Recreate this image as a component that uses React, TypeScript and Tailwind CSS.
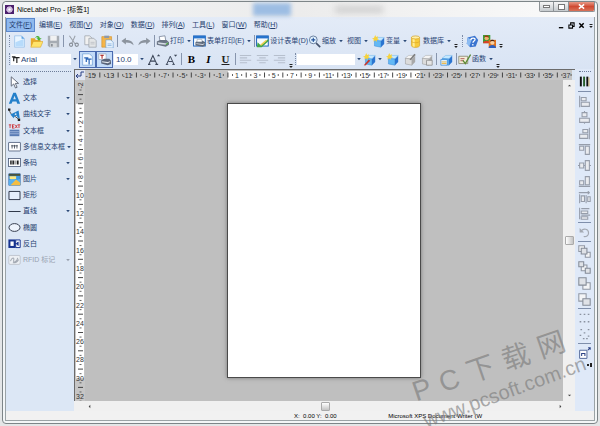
import type { ReactNode } from 'react';

const MENUS = ['文件(F)', '编辑(E)', '视图(V)', '对象(O)', '数据(D)', '排列(A)', '工具(L)', '窗口(W)', '帮助(H)'];

const UNIT = 9.15;

/* ---------- small building blocks ---------- */

function Icon({ children, size = 'w-[13px] h-[13px]' }: { children: ReactNode; size?: string }) {
  return (
    <svg viewBox="0 0 16 16" className={`${size} shrink-0`} fill="none" aria-hidden="true">
      {children}
    </svg>
  );
}

function Arrow({ muted }: { muted?: boolean }) {
  return (
    <svg viewBox="0 0 8 8" className={`w-2 h-2 shrink-0 ${muted ? 'text-gray-400' : 'text-[#2c4a78]'}`} aria-hidden="true">
      <path d="M2.2 3h3.6L4 5.2z" fill="currentColor" />
    </svg>
  );
}

function Grip() {
  return <span className="w-[2px] h-3 shrink-0 border-l border-dotted border-[#7c8ba6]" />;
}

function Sep() {
  return <span className="w-px h-3 mx-px shrink-0 bg-[#8795ad]" />;
}

function Overflow() {
  return (
    <svg viewBox="0 0 6 6" className="w-[6px] h-[6px] shrink-0 self-end" aria-hidden="true">
      <path d="M1.5 1h3v1h-3zM1.2 3h3.6L3 5z" fill="#222" />
    </svg>
  );
}

function IconTool({ label, children }: { label: string; children: ReactNode }) {
  return (
    <button aria-label={label} className="w-[17px] h-4 shrink-0 flex items-center justify-center">
      {children}
    </button>
  );
}

function TextTool({ label, icon, arrow }: { label: string; icon?: ReactNode; arrow?: boolean }) {
  return (
    <button className="h-4 shrink-0 flex items-center gap-px text-[#2a4474] whitespace-nowrap">
      {icon}
      <span>{label}</span>
      {arrow && <Arrow />}
    </button>
  );
}

/* ---------- toolbar drawings ---------- */

function Sparkle() {
  return <path d="M4 0l1 2.4L7.6 1.6 6.6 4 8.6 5.4 6 6l-.4 2.6L4 6.6 1.8 8.2 2.2 5.6 0 4.4l2.4-.8z" fill="#f7d23c" />;
}

function Cube({ gray, spark }: { gray?: boolean; spark?: boolean }) {
  return (
    <>
      <path d="M3 6l4-3h8l-4 4H3z" fill={gray ? '#f4f4f4' : '#c4e8ff'} stroke={gray ? '#9a9a9a' : '#5aa6e6'} strokeWidth=".5" />
      <path d="M3 6.5l8 1V15l-8-1.5z" fill={gray ? '#dcdcdc' : '#62b8f5'} stroke={gray ? '#8f8f8f' : '#3a8ad6'} strokeWidth=".6" />
      <path d="M11 7.500l4-4V11l-4 4z" fill={gray ? '#a8a8a8' : '#2a74d0'} />
      {spark && <Sparkle />}
    </>
  );
}

function Printer() {
  return (
    <>
      <path d="M4 2l7-1 1 6-7 1z" fill="#fff" stroke="#5a6880" strokeWidth=".8" />
      <path d="M1 8l4-2h8l3 3v3l-4 2.5L1 12z" fill="#6a7484" />
      <path d="M2 9l10 1 3-1-3 3-9-1z" fill="#d6dde6" />
      <path d="M12 11l3-2v1.6l-3 2z" fill="#4fae3e" />
    </>
  );
}

function FormWindow({ children }: { children?: ReactNode }) {
  return (
    <>
      <rect x=".7" y="1.2" width="14.4" height="12.4" fill="#f5faff" stroke="#1e63ba" strokeWidth="1.2" />
      <path d="M.5 1h15v3.2H.5z" fill="#2673cc" />
      {children}
    </>
  );
}

function AlignLines({ x }: { x: [number, number] }) {
  return (
    <path
      d={`M1 3h14M${x[0]} 6h${x[1]}M1 9h14M${x[0]} 12h${x[1]}`}
      stroke="#b6bfcd"
      strokeWidth="1.3"
    />
  );
}

function MainToolbar() {
  return (
    <div className="flex items-center h-4 pl-[3px]">
      <Grip />
      <IconTool label="新建">
        <Icon>
          <path d="M2 1h8.5L14 4.5V15H2z" fill="#e9f5ff" stroke="#8bb8e6" strokeWidth=".8" />
          <path d="M3 9l10-4v9H3z" fill="#b7dbfb" />
          <path d="M10.5 1v3.5H14z" fill="#5aa0e2" />
        </Icon>
      </IconTool>
      <IconTool label="打开">
        <Icon>
          <path d="M1 4h5l1 2h6v8H1z" fill="#e6a92c" />
          <path d="M4 8h12l-3 7H1z" fill="#ffe36a" stroke="#d49a1e" strokeWidth=".6" />
          <path d="M6 4c2-4 6-3 6 0h2.4L11 7 8 4h1.8c-.4-1.6-2-1.6-3.8 0z" fill="#49b336" />
        </Icon>
      </IconTool>
      <IconTool label="保存">
        <Icon>
          <path d="M1 1h14v14H3l-2-2z" fill="#a6acb3" />
          <path d="M4 1h8v6H4z" fill="#f0f1f2" />
          <path d="M4 10h8v5H4z" fill="#d5d8db" />
          <path d="M5 11h2v3H5z" fill="#858b92" />
        </Icon>
      </IconTool>
      <Sep />
      <IconTool label="剪切">
        <Icon>
          <path d="M3 1l7 10M10 1L6 10" stroke="#9aa0a8" strokeWidth="1.3" />
          <circle cx="5" cy="12" r="2" stroke="#868d96" strokeWidth="1.3" />
          <circle cx="12" cy="12" r="2" stroke="#868d96" strokeWidth="1.3" />
        </Icon>
      </IconTool>
      <IconTool label="复制">
        <Icon>
          <path d="M1 1h6l3 3v8H1z" fill="#f1f1f1" stroke="#9aa0a8" strokeWidth=".9" />
          <path d="M6 4h6l3 3v8H6z" fill="#e3e5e7" stroke="#9aa0a8" strokeWidth=".9" />
          <path d="M8 9h5M8 11h5" stroke="#b9bdc3" />
        </Icon>
      </IconTool>
      <IconTool label="粘贴">
        <Icon>
          <path d="M1 2h12v13H1z" fill="#f5b54a" stroke="#d08c22" strokeWidth=".7" />
          <path d="M4 .8h6v3H4z" fill="#8e99a8" />
          <path d="M6 6h6l3 3v7H6z" fill="#e8f3fd" stroke="#6fa0d4" strokeWidth=".8" />
          <path d="M8 11h5M8 13h5" stroke="#84b0de" />
        </Icon>
      </IconTool>
      <Sep />
      <IconTool label="撤销">
        <Icon>
          <path d="M.5 7.500L6 3.500V6c5.500 0 9 2 9.500 6.500C13 10 10 9.200 6 9.200v2.600z" fill="#8c949e" />
        </Icon>
      </IconTool>
      <IconTool label="重做">
        <Icon>
          <path d="M15.500 7.500L10 3.500V6C4.500 6 1 8 .5 12.500 3 10 6 9.200 10 9.200v2.600z" fill="#8c949e" />
        </Icon>
      </IconTool>
      <Sep />
      <TextTool label="打印" arrow icon={<Icon><Printer /></Icon>} />
      <TextTool
        label="表单打印(E)"
        arrow
        icon={
          <Icon>
            <FormWindow>
              <path d="M3 9l3-2h6l3 2v4l-3 1.500-9-1.500z" fill="#5f6a7b" />
              <path d="M5 5.500h6v3H5z" fill="#fff" stroke="#8793a4" strokeWidth=".6" />
              <path d="M4 10l8 1 2-1v1l-2 1.200-8-1z" fill="#d8dee6" />
            </FormWindow>
          </Icon>
        }
      />
      <Sep />
      <TextTool
        label="设计表单(D)"
        icon={
          <Icon>
            <FormWindow>
              <path d="M2 9l4 4 9-8 .6 2.400L7 15H1z" fill="#43a54a" />
              <path d="M5 12l7-6 1.400 1.200-7 6z" fill="#f2cf4c" />
            </FormWindow>
          </Icon>
        }
      />
      <TextTool
        label="缩放"
        arrow
        icon={
          <Icon>
            <circle cx="6.500" cy="6" r="4.800" fill="#e2f2ff" stroke="#6b7f9f" strokeWidth="1.200" />
            <path d="M6.500 3.500v5M4 6h5" stroke="#1f4f98" strokeWidth="1.300" />
            <path d="M10 10l5 5" stroke="#46546e" strokeWidth="2" />
          </Icon>
        }
      />
      <span className="w-[2px]" />
      <TextTool label="视图" arrow />
      <span className="w-[2px]" />
      <TextTool label="变量" arrow icon={<Icon><Cube spark /></Icon>} />
      <TextTool
        label="数据库"
        arrow
        icon={
          <Icon>
            <path d="M3 3v10c0 3 10 3 10 0V3z" fill="#f7cb3c" stroke="#d6a020" strokeWidth=".8" />
            <path d="M4.500 4v9.500c1 .8 2 1 2.500 1V4z" fill="#ffec96" />
            <ellipse cx="8" cy="3" rx="5" ry="1.900" fill="#fff0a8" stroke="#d09a16" strokeWidth=".8" />
            <path d="M3 8c1 2 9 2 10 0" stroke="#d6a020" strokeWidth=".7" />
          </Icon>
        }
      />
      <Overflow />
      <span className="w-[3px]" />
      <Grip />
      <IconTool label="帮助">
        <Icon>
          <path d="M2 3l9-2 4 5-3 8-7 1-4-5z" fill="#3a74d0" />
          <path d="M2 3l5 3-3 8-3-4z" fill="#8dbcf2" />
          <path d="M6 6c0-3 6-3 5 0-.4 1.600-2.400 1.600-2.400 3.600M8.400 11v1.800" stroke="#fff" strokeWidth="1.600" />
        </Icon>
      </IconTool>
      <IconTool label="支持">
        <Icon>
          <path d="M0 0h9v10H0z" fill="#3d9b35" />
          <circle cx="4.500" cy="4" r="2.600" fill="#f0b070" />
          <path d="M1.500 2.500C2.500 0 6.500 0 7.500 3L4.500 2.500z" fill="#a63a14" />
          <path d="M0 10c0-4 9-4 9 0z" fill="#d84226" />
          <path d="M7 6h9v10H7z" fill="#e2721c" />
          <circle cx="11.500" cy="9.500" r="2.600" fill="#f8cfa0" />
          <path d="M8.500 8c1-3 5-3 6 0l-3-.5z" fill="#4c2410" />
          <path d="M7 16c0-5 9-5 9 0z" fill="#2c5fc0" />
        </Icon>
      </IconTool>
      <Overflow />
    </div>
  );
}

function FormatToolbar() {
  return (
    <div className="flex items-center h-5 pl-[3px] text-[#2a4474]">
      <Grip />
      <div className="flex items-center gap-px w-[60px] h-[11px] bg-white">
        <svg viewBox="0 0 10 10" className="w-[9px] h-[9px]" aria-hidden="true">
          <path d="M1 2h4M3 2v5M3 3h6.500M6.500 3v6" stroke="#222" strokeWidth="1.300" fill="none" />
        </svg>
        <select aria-label="字体" className="appearance-none flex-1 min-w-0 bg-transparent text-[8px] leading-[11px]">
          <option>Arial</option>
        </select>
      </div>
      <Arrow />
      <button aria-label="TrueType 字体" aria-pressed="true" className="w-[17px] h-[17px] flex items-center justify-center border border-[#4a6bb0] bg-[#c3dbf8]">
        <Icon>
          <path d="M2 1h8.500L14 4.500V15H2z" fill="#f4faff" stroke="#6f9fd6" strokeWidth=".9" />
          <path d="M4 6h5M6.500 6v5M6.500 7.500H13M10 7.500V14" stroke="#2b66b8" strokeWidth="1.500" />
        </Icon>
      </button>
      <button aria-label="打印机字体" aria-pressed="true" className="w-[17px] h-[17px] flex items-center justify-center border border-[#4a6bb0] bg-[#c3dbf8]">
        <Icon>
          <path d="M1 1h9v7H1z" fill="#fff" stroke="#8a97ab" strokeWidth=".7" />
          <path d="M3 3h4M5 3v4" stroke="#b03434" strokeWidth="1.400" />
          <path d="M4 9l4-2h6l2 2.500v4L12 15l-8-2z" fill="#59647a" />
          <path d="M5 10l7 1 3-1v1.200L12 12.600 5 11.400z" fill="#e4e9ef" />
        </Icon>
      </button>
      <input aria-label="字号" defaultValue="10.0" className="w-6 h-[11px] ml-px px-[2px] bg-white text-[8px] leading-[11px]" />
      <Arrow />
      <IconTool label="增大字号">
        <Icon>
          <path d="M1 14L6 3l5 11M3 10h6M0 14h3M9 14h3.500" stroke="#3c4658" strokeWidth="1.300" />
          <path d="M11 4l2-2.500L15 4z" fill="#3c4658" />
        </Icon>
      </IconTool>
      <IconTool label="减小字号">
        <Icon>
          <path d="M2 14L6.500 4 11 14M4 10.500h5M1 14h3M9 14h3" stroke="#3c4658" strokeWidth="1.200" />
          <path d="M11 2l2 2.500L15 2z" fill="#3c4658" />
        </Icon>
      </IconTool>
      <Sep />
      <button aria-label="粗体" className="w-[17px] font-bold text-[11px] leading-4 text-black font-['Liberation_Serif',serif]">B</button>
      <button aria-label="斜体" className="w-[17px] font-bold italic text-[11px] leading-4 text-black font-['Liberation_Serif',serif]">I</button>
      <button aria-label="下划线" className="w-[17px] underline font-bold text-[11px] leading-4 text-[#222] font-['Liberation_Serif',serif]">U</button>
      <Sep />
      <IconTool label="左对齐"><Icon><AlignLines x={[1, 9]} /></Icon></IconTool>
      <IconTool label="居中"><Icon><AlignLines x={[4, 8]} /></Icon></IconTool>
      <IconTool label="右对齐"><Icon><AlignLines x={[6, 9]} /></Icon></IconTool>
      <Overflow />
      <span className="w-px" />
      <Grip />
      <select aria-label="变量" className="appearance-none w-[58px] h-[11px] bg-white" />
      <Arrow />
      <button aria-label="编辑变量" className="flex items-center w-[21px] justify-between">
        <Icon>
          <Cube />
          <path d="M1 15l6-7 2 1.500L3 15.500z" fill="#c8372c" />
          <Sparkle />
        </Icon>
        <Arrow />
      </button>
      <IconTool label="新建变量"><Icon><Cube spark /></Icon></IconTool>
      <IconTool label="变量属性">
        <Icon>
          <Cube gray />
          <path d="M8 8l6-7 1.500 1-6 7z" fill="#7c7c7c" />
        </Icon>
      </IconTool>
      <IconTool label="查找变量">
        <Icon>
          <Cube gray />
          <path d="M8 9h7v6H8z" fill="#e6e6e6" stroke="#8f8f8f" />
        </Icon>
      </IconTool>
      <Sep />
      <IconTool label="链接变量">
        <Icon>
          <Cube />
          <path d="M1 8h8v7H1z" fill="#dff0ff" stroke="#2b7ed0" strokeWidth=".8" />
          <path d="M2 11h6M2 13h6" stroke="#f0ab1e" />
        </Icon>
      </IconTool>
      <Sep />
      <TextTool
        label="函数"
        arrow
        icon={
          <Icon>
            <path d="M1 4h11v9H1z" fill="#f4eed8" stroke="#7d7a62" strokeWidth=".9" />
            <path d="M3 7h5M3 9.500h4" stroke="#a23d3d" />
            <path d="M6 9l3 4 6.500-11" stroke="#5b8a35" strokeWidth="1.700" />
          </Icon>
        }
      />
      <Overflow />
    </div>
  );
}

/* ---------- left palette ---------- */

const TOOLS: { label: string; arrow?: boolean; muted?: boolean; icon: ReactNode }[] = [
  { label: '选择', icon: <path d="M4 1v11.500l3-2.700 2.200 5 2-.9-2.200-4.800h4z" fill="#fff" stroke="#5a6272" strokeWidth="1.100" /> },
  {
    label: '文本',
    arrow: true,
    icon: <path d="M6.500 1h3.200L15 14.500h-3.600l-1-2.900H5.600l-1.400 2.900H1zM8 4.500L6.500 9h3.200z" fill="#2480ca" />,
  },
  {
    label: '曲线文字',
    arrow: true,
    icon: (
      <>
        <path d="M1.500 2C3 10 8 8 13.500 14.500" stroke="#333" />
        <path d="M0 .5h3v3H0zM12 13h3v3h-3z" fill="#222" />
        <path d="M3 8l10-5 1.500 10-3-1.200-.4-2.400-3.100.600-1 2.600zM9.800 5.600L7.800 9l2.800-.6z" fill="#2480ca" />
      </>
    ),
  },
  {
    label: '文本框',
    arrow: true,
    icon: (
      <>
        <path d="M1 1h3M2.500 1v4M5.500 1v4M5 1h3M5 3h2M5 5h3M9 1l2.500 4M11.500 1L9 5M12 1h3M13.500 1v4" stroke="#cc3338" strokeWidth="1.100" />
        <path d="M2 7h12v8H2z" fill="#587bb4" />
        <path d="M2 9.500h12M2 12h12" stroke="#a8bce0" />
      </>
    ),
  },
  {
    label: '多信息文本框',
    arrow: true,
    icon: (
      <>
        <rect x=".7" y="3" width="14.600" height="10.500" rx=".6" fill="#fff" stroke="#4a5a78" />
        <path d="M5 6v4.500M8 6v4.500M11 6v4.500M4 7.200h8" stroke="#3d4654" strokeWidth="1" />
      </>
    ),
  },
  {
    label: '条码',
    arrow: true,
    icon: (
      <>
        <rect x=".7" y="3" width="14.600" height="10" fill="#fff" stroke="#4a5a78" />
        <path d="M3.500 5.500v5M6.500 5.500v5M11.500 5.500v5" stroke="#111" strokeWidth="1.500" />
        <path d="M5 5.500v5M8.700 5.500v5M13 5.500v5" stroke="#111" strokeWidth=".8" />
      </>
    ),
  },
  {
    label: '图片',
    arrow: true,
    icon: (
      <>
        <path d="M1 1h14v14H1z" fill="#3e9be6" stroke="#4470a8" />
        <path d="M1 9l5-3 4 3 5-2v8H1z" fill="#59b1ee" />
        <path d="M3 15l7-7 5 4v3z" fill="#f4bd42" />
        <path d="M1 1h14v2.500H1z" fill="#49523b" />
        <path d="M2 4h8v3.500H2z" fill="#ffe77d" />
      </>
    ),
  },
  { label: '矩形', icon: <path d="M1.200 3h13.600v10H1.200z" fill="#e6eefb" stroke="#30394a" strokeWidth="1.200" /> },
  { label: '直线', arrow: true, icon: <path d="M.5 8h15" stroke="#30394a" strokeWidth="1.300" /> },
  { label: '椭圆', icon: <ellipse cx="8" cy="8" rx="6.800" ry="4.800" fill="#eef4fd" stroke="#30394a" strokeWidth="1.200" /> },
  {
    label: '反白',
    icon: (
      <>
        <path d="M.5 3h9v10.500h-9z" fill="#17338f" />
        <path d="M3 5.500h4v5.500H3z" fill="#fff" />
        <path d="M9.500 3.600h5.500v9.400H9.500z" fill="#fff" stroke="#17338f" strokeWidth="1.200" />
        <path d="M8 8.200h3M12.500 6v4.500L10.500 8.200z" fill="#17338f" stroke="#17338f" />
      </>
    ),
  },
  {
    label: 'RFID 标记',
    arrow: true,
    muted: true,
    icon: (
      <>
        <rect x="1" y="3" width="14" height="11" rx="1.500" fill="#edf0f4" stroke="#b9bfc8" />
        <path d="M3 10c2-5 5-5 4-1s4 2 5-3M6 12c3 0 6-1 7-4" stroke="#a5abb4" strokeWidth="1.300" />
      </>
    ),
  },
];

function Palette() {
  return (
    <aside className="w-[68px] shrink-0 bg-[#dce7f5] pt-[2px]">
      <div className="mx-[3px] border-t border-dotted border-[#6d7d99]" />
      <div className="flex flex-col justify-between h-[194px] mt-[2px]">
        {TOOLS.map((tool) => (
          <button
            key={tool.label}
            disabled={tool.muted}
            className={`flex items-center h-4 w-full pl-[2px] pr-[2px] whitespace-nowrap ${tool.muted ? 'text-[#98a1b0]' : 'text-[#26406e]'}`}
          >
            <Icon>{tool.icon}</Icon>
            <span className="flex-1 pl-[2px] text-left">{tool.label}</span>
            {tool.arrow && <Arrow muted={tool.muted} />}
          </button>
        ))}
      </div>
    </aside>
  );
}

/* ---------- rulers ---------- */

// 0 sits on the page edge; the middle of the drawing is the middle of the page
function HorizontalRuler() {
  const zero = 300 - 10.5 * UNIT;
  const marks = Array.from({ length: 53 }, (_, i) => i - 15);
  return (
    <div className="flex-1 min-w-0 h-[10px] pr-[9px] flex justify-center overflow-hidden bg-[#c6c6c6]">
      <svg width="600" height="10" viewBox="0 0 600 10" className="shrink-0">
        <rect x={zero} y="1" width={21 * UNIT} height="8" fill="#fff" />
        {marks.map((n) => {
          const x = zero + n * UNIT;
          return (
            <g key={n}>
              {n % 2 === 0 ? (
                <path d={`M${x} 2.500v5`} stroke="#333" strokeWidth=".9" />
              ) : (
                <text x={x} y="8" textAnchor="middle" fontSize="7" fill="#333">{n}</text>
              )}
              <path d={`M${x + UNIT / 2} 4v2`} stroke="#555" strokeWidth=".9" />
            </g>
          );
        })}
      </svg>
    </div>
  );
}

// one digit numbers lie on their side, longer ones stand upright
function VerticalRuler() {
  const zero = 200 - 15 * UNIT;
  const marks = Array.from({ length: 35 }, (_, i) => i - 2);
  return (
    <div className="w-[11px] shrink-0 flex flex-col justify-center overflow-hidden bg-[#c6c6c6] border-l border-[#6b6b6b]">
      <svg width="10" height="400" viewBox="0 0 10 400" className="shrink-0">
        <rect x="1" y={zero} width="8" height={30 * UNIT} fill="#fff" />
        {marks.map((n) => {
          const y = zero + n * UNIT;
          return (
            <g key={n}>
              {n % 2 !== 0 || n === 0 ? (
                <path d={`M3 ${y}h5`} stroke="#333" strokeWidth=".9" />
              ) : (
                <text
                  transform={n < 10 ? `translate(8 ${y}) rotate(-90)` : `translate(5 ${y + 2.5})`}
                  textAnchor="middle"
                  fontSize="7"
                  fill="#333"
                >
                  {n}
                </text>
              )}
              <path d={`M4.500 ${y + UNIT / 2}h2`} stroke="#555" strokeWidth=".9" />
            </g>
          );
        })}
      </svg>
    </div>
  );
}

function Workspace() {
  return (
    <main className="flex-1 min-w-0 flex flex-col">
      <div className="flex border-t border-[#6b6b6b]">
        <div className="w-[11px] h-[10px] shrink-0 bg-[#dfe5f2] border-l border-[#6b6b6b]">
          <svg viewBox="0 0 10 10" className="w-[10px] h-[10px]" aria-hidden="true">
            <path d="M1 6h5M3 4L1 6l2 2M6 2h3M6 2v4" stroke="#2b4184" fill="none" />
          </svg>
        </div>
        <HorizontalRuler />
        <div className="w-[3px] bg-[#dce7f5]" />
      </div>
      <div className="flex-1 min-h-0 flex">
        <VerticalRuler />
        <div className="flex-1 min-w-0 flex items-center justify-center overflow-hidden bg-[#bfbfbf]">
          <div className="w-[194px] h-[275px] bg-white border border-[#4a4a4a] shadow-[0_0_4px_#777]" />
        </div>
        <div className="w-3 shrink-0 flex flex-col items-center justify-between py-[3px] bg-[#f0f0f0] text-[#444]">
          <svg viewBox="0 0 6 6" className="w-[5px] h-[5px]" aria-hidden="true"><path d="M1 4h4L3 2z" fill="currentColor" /></svg>
          <div className="w-[9px] h-[9px] rounded-[1px] border border-[#aaa] bg-linear-to-r from-white to-[#c4c4c4]" />
          <svg viewBox="0 0 6 6" className="w-[5px] h-[5px]" aria-hidden="true"><path d="M1 2h4L3 4z" fill="currentColor" /></svg>
        </div>
      </div>
      <div className="h-[10px] shrink-0 flex items-center justify-between pl-[13px] pr-3 bg-[#f0f0f0] text-[#444]">
        <svg viewBox="0 0 6 6" className="w-[5px] h-[5px]" aria-hidden="true"><path d="M4 1v4L2 3z" fill="currentColor" /></svg>
        <div className="w-[9px] h-[9px] rounded-[1px] border border-[#aaa] bg-linear-to-b from-white to-[#c4c4c4]" />
        <svg viewBox="0 0 6 6" className="w-[5px] h-[5px]" aria-hidden="true"><path d="M2 1v4l2-2z" fill="currentColor" /></svg>
      </div>
    </main>
  );
}

/* ---------- right bar ---------- */

const ALIGN = [
  { label: '左边对齐', d: 'M2 1v14M4 3h6v4H4zM4 9h10v5H4z' },
  { label: '水平居中', d: 'M8 0v2M8 15v1M5 2h6v5H5zM2 9h12v5H2z' },
  { label: '右边对齐', d: 'M14 1v14M6 3h6v4H6zM2 9h10v5H2z' },
  { label: '顶端对齐', d: 'M1 2h14M2 4h5v5H2zM9 4h5v10H9z' },
  { label: '垂直居中', d: 'M0 8h2M7 8h2M14 8h2M2 5h5v6H2zM9 2h5v12H9z' },
  { label: '底端对齐', d: 'M1 14h14M2 7h5v5H2zM9 2h5v10H9z' },
  { label: '水平分布', d: 'M2 4v11M1 2h13M12 0l2 2-2 2M4 6h4v7H4zM10 5v10M12 7h3v6h-3z' },
  { label: '垂直分布', d: 'M2 1v14M4 2h10M4 5h8v3H4zM4 10h11M4 12h8v3H4z' },
];

const ORDER = [
  { label: '置于顶层', d: 'M1 1h7v7H1zM9 9h6v6H9z', top: 'M4 4h7v7H4z' },
  { label: '置于底层', d: 'M4 5h7v7H4z', top: 'M1 1h6v6H1zM9 9h6v6H9z' },
  { label: '上移一层', d: 'M6 7h9v8H6z', top: 'M1 1h9v9H1z' },
  { label: '下移一层', d: 'M1 1h9v9H1z', top: 'M6 7h9v8H6z' },
];

const GROUP = [
  { label: '组合', d: 'M2 3h2M7 3h2M12 3h2M2 12h2M12 12h2M7 12h2' },
  { label: '取消组合', d: 'M3 2h2M12 2h2M7 6h2M2 9h2M12 10h2M6 13h2M10 13h2' },
];

function RightRule() {
  return <div className="w-[13px] h-px bg-[#7f8fab]" />;
}

function RightBar() {
  return (
    <aside className="w-[19px] shrink-0 flex flex-col items-center bg-[#dfe9f8] pt-[2px]">
      <div className="w-3 border-t border-dotted border-[#6d7d99]" />
      <button aria-label="条码" className="h-[19px] flex items-center">
        <Icon>
          <path d="M3.500 2v12" stroke="#111" strokeWidth="2.400" />
          <path d="M7.500 2v12" stroke="#28602c" strokeWidth="2.400" />
          <path d="M11.500 2v12" stroke="#111" strokeWidth="2.400" />
          <path d="M13.500 3v11" stroke="#c9a94c" />
        </Icon>
      </button>
      <RightRule />
      <div className="flex flex-col items-center py-px">
        {ALIGN.map((a) => (
          <button key={a.label} aria-label={a.label} className="h-4 flex items-center">
            <Icon><path d={a.d} fill="#e9ebef" stroke="#969daa" strokeWidth="1.300" /></Icon>
          </button>
        ))}
      </div>
      <RightRule />
      <button aria-label="旋转" className="h-[18px] flex items-center">
        <Icon>
          <path d="M4 6c3-4 9-2 9 2.500C13 12 10 13.500 7 13" stroke="#a3a9b2" strokeWidth="1.400" />
          <path d="M2 2.500V8h5.500z" fill="#a3a9b2" />
        </Icon>
      </button>
      <RightRule />
      <div className="flex flex-col items-center py-px">
        {ORDER.map((o) => (
          <button key={o.label} aria-label={o.label} className="h-4 flex items-center">
            <Icon>
              <path d={o.d} fill="#f3f4f6" stroke="#9097a3" strokeWidth="1.300" />
              <path d={o.top} fill="#dfe2e7" stroke="#858c98" strokeWidth="1.300" />
            </Icon>
          </button>
        ))}
      </div>
      <RightRule />
      <div className="flex flex-col items-center py-px">
        {GROUP.map((g) => (
          <button key={g.label} aria-label={g.label} className="h-4 flex items-center">
            <Icon><path d={g.d} stroke="#8a92a0" strokeWidth="1.600" /></Icon>
          </button>
        ))}
      </div>
      <RightRule />
      <button aria-label="对象大小" className="h-[18px] flex items-center">
        <Icon>
          <path d="M2 4h9v10H2z" fill="#fff" stroke="#52699a" strokeWidth="1.200" />
          <path d="M4.500 11V8h4v3" stroke="#2b4184" strokeWidth="1.300" />
          <path d="M12 4l3-3M12.500 1H15v2.500" stroke="#2b4184" strokeWidth="1.300" />
        </Icon>
      </button>
      <svg viewBox="0 0 6 6" className="w-[6px] h-[6px] ml-[10px]" aria-hidden="true">
        <path d="M0 2h2v2H0zM3 1h2v4H3z" fill="#222" />
      </svg>
    </aside>
  );
}

/* ---------- window ---------- */

function TitleBar() {
  return (
    <header className="relative flex items-center h-[15px] bg-linear-to-r from-[#f3f5f6] via-[#ececec] to-[#fbfbfb]">
      <div className="absolute inset-y-0 left-[42%] w-[38px] my-px bg-[#9dbde3] blur-[2px]" />
      <div className="absolute inset-y-0 left-[56%] w-12 my-1 bg-[#d0d0d0] blur-[3px]" />
      <svg viewBox="0 0 16 16" className="w-[9px] h-[9px]" aria-hidden="true">
        <rect width="16" height="16" fill="#4c1f6d" />
        <circle cx="8" cy="8" r="5" fill="#c7aedb" />
        <circle cx="8" cy="8" r="5" fill="none" stroke="#fff" strokeWidth="1.500" strokeDasharray="2 1" />
        <circle cx="8" cy="8" r="2.200" fill="#fff" />
      </svg>
      <h1 className="pl-[3px] text-[7px] text-black whitespace-nowrap">NiceLabel Pro - [标签1]</h1>
      <div className="ml-auto self-start flex h-[10px] rounded-b-[2px] overflow-hidden border border-t-0 border-[#8d9296]">
        <button aria-label="最小化" className="w-[14px] flex items-center justify-center bg-linear-to-b from-[#f6f6f6] to-[#c5cacd] border-r border-[#8d9296]">
          <span className="w-[7px] h-[3px] bg-white border border-[#777]" />
        </button>
        <button aria-label="最大化" className="w-[15px] flex items-center justify-center bg-linear-to-b from-[#f6f6f6] to-[#c5cacd] border-r border-[#8d9296]">
          <span className="w-[7px] h-[6px] bg-white border border-[#777]" />
        </button>
        <button aria-label="关闭" className="w-[25px] flex items-center justify-center bg-linear-to-b from-[#e79a88] via-[#cf4a33] to-[#d97258]">
          <svg viewBox="0 0 8 8" className="w-[7px] h-[7px]" aria-hidden="true">
            <path d="M1 1.500l6 5M7 1.500l-6 5" stroke="#fff" strokeWidth="1.700" />
          </svg>
        </button>
      </div>
    </header>
  );
}

function MenuBar() {
  return (
    <nav className="flex items-center gap-px h-4 text-[#26406e]">
      {MENUS.map((menu, i) => (
        <button
          key={menu}
          className={`h-[14px] px-[2px] whitespace-nowrap border ${i === 0 ? 'border-[#5c88cc] bg-[#8fb9ee]' : 'border-transparent'}`}
        >
          {menu.slice(0, 3)}
          <u>{menu[3]}</u>
          {menu.slice(4)}
        </button>
      ))}
      <div className="ml-auto flex items-center gap-[3px] text-black">
        <button aria-label="最小化文档">
          <svg viewBox="0 0 8 8" className="w-[7px] h-[7px]"><path d="M1 6.500h5" stroke="currentColor" strokeWidth="1.500" /></svg>
        </button>
        <button aria-label="还原文档">
          <svg viewBox="0 0 8 8" className="w-[7px] h-[7px]" fill="none"><path d="M3 3V1h4v4H5.500M1 3.500h4.200v3.500H1z" stroke="currentColor" strokeWidth="1.200" /></svg>
        </button>
        <button aria-label="关闭文档">
          <svg viewBox="0 0 8 8" className="w-[7px] h-[7px]"><path d="M1.500 1.500l5 5M6.500 1.500l-5 5" stroke="currentColor" strokeWidth="1.700" /></svg>
        </button>
        <Overflow />
      </div>
    </nav>
  );
}

function Watermark() {
  return (
    <div className="absolute right-[3px] bottom-0 w-[190px] h-[100px] pointer-events-none text-[#777]/60">
      <div className="absolute left-[2px] top-[25px] w-[160px] flex items-end justify-between text-[28px] leading-8 -rotate-[19deg]">
        <span>P</span>
        <span>C</span>
        <span>下</span>
        <span>载</span>
        <span>网</span>
      </div>
      <div className="absolute left-[12px] top-[54px] text-[20px] leading-6 -rotate-[20deg]">www.pcsoft.com.cn</div>
    </div>
  );
}

export default function App() {
  return (
    <div className="relative flex flex-col h-screen overflow-hidden bg-[#e4e6e7] px-[2px] pt-px pb-[2px] text-[7px] leading-[10px] font-['Liberation_Sans','Noto_Sans_CJK_SC',sans-serif]">
      <div className="flex-1 min-h-0 flex flex-col rounded-[4px] border border-[#7d8588] bg-[#f3f6f7] px-[2px] pb-[2px]">
        <TitleBar />
        <div className="flex-1 min-h-0 flex flex-col border-x border-b border-[#9ba3a6] bg-[#f1f1f1]">
          <div className="bg-linear-to-b from-[#e3ebf7] to-[#d9e4f4]">
            <MenuBar />
            <MainToolbar />
            <FormatToolbar />
          </div>
          <div className="flex-1 min-h-0 flex">
            <Palette />
            <Workspace />
            <RightBar />
          </div>
          <footer className="flex h-[9px] shrink-0 items-center text-[6px] leading-[8px] text-black whitespace-nowrap">
            <span className="w-[49%] shrink-0" />
            <span className="w-[16%] shrink-0">X:&nbsp; 0.00 Y:&nbsp; 0.00</span>
            <span>Microsoft XPS Document Writer (W</span>
          </footer>
        </div>
      </div>
      <Watermark />
    </div>
  );
}
